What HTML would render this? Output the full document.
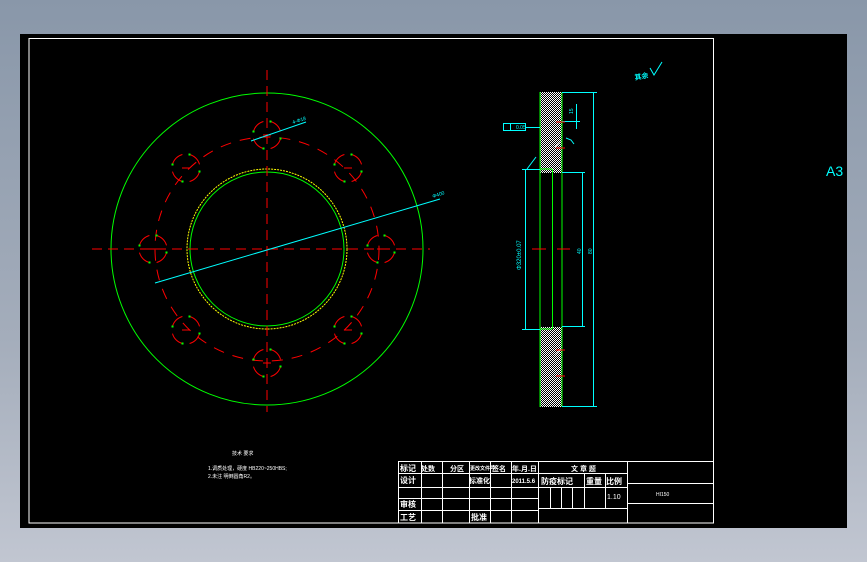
<!DOCTYPE html>
<html><head><meta charset="utf-8"><style>
html,body{margin:0;padding:0;}
body{width:867px;height:562px;overflow:hidden;background:linear-gradient(#8997a9,#a4adbb 60%,#c1c6d1);position:relative;font-family:"Liberation Sans","Noto Sans CJK SC",sans-serif;}
svg{position:absolute;left:0;top:0;}
</style></head><body>
<svg width="867" height="562" viewBox="0 0 867 562">
<defs>
<pattern id="hatch" width="2" height="2" patternUnits="userSpaceOnUse"><rect width="2" height="2" fill="#000"/><rect width="1" height="1" fill="#fff"/><rect x="1" y="1" width="1" height="1" fill="#fff"/></pattern>
<g id="bolt" fill="none" stroke="#f00" stroke-width="1">
<path d="M13.5 3.6 A14 14 0 0 1 3.6 13.5"/>
<path d="M-3.6 13.5 A14 14 0 0 1 -13.5 3.6"/>
<path d="M-13.5 -3.6 A14 14 0 0 1 -3.6 -13.5"/>
<path d="M3.6 -13.5 A14 14 0 0 1 13.5 -3.6"/>
<line x1="-4" y1="0" x2="4" y2="0"/>
<rect x="12.5" y="2.5" width="2" height="2" fill="#0f0" stroke="none"/>
<rect x="-4.5" y="12.5" width="2" height="2" fill="#0f0" stroke="none"/>
<rect x="-14.5" y="-4.5" width="2" height="2" fill="#0f0" stroke="none"/>
<rect x="2.5" y="-14.5" width="2" height="2" fill="#0f0" stroke="none"/>
</g>
</defs>
<rect x="20" y="34" width="827" height="494" fill="#000"/>
<rect x="29" y="38.5" width="684.5" height="484.5" fill="none" stroke="#fff" stroke-width="1"/>
<text x="826" y="176" fill="#0ff" font-size="14" font-family="Liberation Sans Narrow,Liberation Sans,sans-serif">A3</text>

<circle cx="267" cy="249" r="156" fill="none" stroke="#0f0" stroke-width="1"/>
<circle cx="267" cy="249" r="80" fill="none" stroke="#ff0" stroke-width="1" stroke-dasharray="2 1"/>
<circle cx="267" cy="249" r="77" fill="none" stroke="#0f0" stroke-width="1"/>
<circle cx="267" cy="249" r="112" fill="none" stroke="#f00" stroke-width="1" stroke-dasharray="11 9"/>
<line x1="92" y1="249" x2="430" y2="249" stroke="#f00" stroke-dasharray="10 6"/>
<line x1="267" y1="70" x2="267" y2="412" stroke="#f00" stroke-dasharray="10 6"/>
<use href="#bolt" x="381" y="249"/>
<use href="#bolt" x="153" y="249"/>
<use href="#bolt" x="267" y="135"/>
<use href="#bolt" x="267" y="363"/>
<use href="#bolt" x="348" y="168"/>
<use href="#bolt" x="186" y="168"/>
<use href="#bolt" x="186" y="330"/>
<use href="#bolt" x="348" y="330"/>
<line x1="155" y1="283" x2="440" y2="199" stroke="#0ff" stroke-width="1"/>
<line x1="251" y1="141" x2="306" y2="122" stroke="#0ff" stroke-width="1"/>
<text x="293" y="124" fill="#0ff" font-size="5" transform="rotate(-18 293 124)">4-Φ18</text>
<text x="433" y="198" fill="#0ff" font-size="5" transform="rotate(-18 433 198)">Φ400</text>

<rect x="540" y="92" width="22" height="81" fill="url(#hatch)"/>
<rect x="540" y="327" width="22" height="80" fill="url(#hatch)"/>
<line x1="540" y1="92" x2="540" y2="407" stroke="#0f0"/>
<line x1="562" y1="92" x2="562" y2="407" stroke="#0f0"/>
<line x1="552.5" y1="169" x2="552.5" y2="329" stroke="#0f0"/>
<line x1="540" y1="169" x2="552" y2="169" stroke="#0f0"/>
<line x1="540" y1="329" x2="552" y2="329" stroke="#0f0"/>
<line x1="555" y1="147" x2="561" y2="140" stroke="#fff" stroke-width=".6"/>
<line x1="555" y1="356" x2="561" y2="349" stroke="#fff" stroke-width=".6"/>
<g stroke="#0ff" fill="none" stroke-width="1">
<line x1="562" y1="92.5" x2="597" y2="92.5"/>
<line x1="562" y1="406.5" x2="597" y2="406.5"/>
<line x1="593.5" y1="92" x2="593.5" y2="407"/>
<line x1="562" y1="172.5" x2="585" y2="172.5"/>
<line x1="562" y1="326.5" x2="585" y2="326.5"/>
<line x1="582.5" y1="172" x2="582.5" y2="327"/>
<line x1="522" y1="169.5" x2="540" y2="169.5"/>
<line x1="522" y1="329.5" x2="540" y2="329.5"/>
<line x1="525.5" y1="169" x2="525.5" y2="329"/>
<rect x="503.5" y="123.5" width="22" height="7"/>
<line x1="510.5" y1="123.5" x2="510.5" y2="130.5"/>
<line x1="526" y1="127.5" x2="540" y2="127.5"/>
<line x1="576.5" y1="104" x2="576.5" y2="129"/>
<line x1="562" y1="121.5" x2="580" y2="121.5"/>
</g>
<line x1="556" y1="122" x2="565" y2="122" stroke="#f00"/>
<line x1="556" y1="148" x2="565" y2="148" stroke="#f00"/>
<line x1="556" y1="350" x2="565" y2="350" stroke="#f00"/>
<line x1="556" y1="376" x2="565" y2="376" stroke="#f00"/>
<line x1="532" y1="249" x2="546" y2="249" stroke="#f00"/>
<line x1="557" y1="249" x2="570" y2="249" stroke="#f00"/>
<text x="521" y="270" fill="#0ff" font-size="6" transform="rotate(-90 521 270)">Φ320±0.07</text>
<text x="581" y="254" fill="#0ff" font-size="5" transform="rotate(-90 581 254)">40</text>
<text x="592" y="254" fill="#0ff" font-size="5" transform="rotate(-90 592 254)">80</text>
<text x="573" y="114" fill="#0ff" font-size="5" transform="rotate(-90 573 114)">15</text>
<text x="516" y="129" fill="#0ff" font-size="5">0.05</text>
<text x="635" y="80" fill="#0ff" font-size="7" font-weight="bold" transform="rotate(-10 635 80)">其余</text>
<path d="M650 68 L654 75 L662 62" stroke="#0ff" fill="none"/>
<path d="M527 169 L530 165 L536 157" stroke="#0ff" fill="none"/>
<path d="M566 138 L571 140 L574 144" stroke="#0ff" fill="none"/>

<text x="232" y="455" fill="#fff" font-size="5">技术 要求</text>
<text x="208" y="470" fill="#fff" font-size="5">1.调质处理，硬度 HB220~250HBS;</text>
<text x="208" y="478" fill="#fff" font-size="5">2.未注 明倒圆角R2。</text>

<g stroke="#fff" stroke-width="1" fill="none">
<line x1="398.5" y1="461.5" x2="713" y2="461.5"/>
<line x1="398.5" y1="473.5" x2="627" y2="473.5"/>
<line x1="398.5" y1="487.5" x2="538" y2="487.5"/>
<line x1="398.5" y1="498.5" x2="538" y2="498.5"/>
<line x1="398.5" y1="510.5" x2="538" y2="510.5"/>
<line x1="398.5" y1="461" x2="398.5" y2="523"/>
<line x1="421.5" y1="461" x2="421.5" y2="523"/>
<line x1="442.5" y1="461" x2="442.5" y2="523"/>
<line x1="469.5" y1="461" x2="469.5" y2="523"/>
<line x1="490.5" y1="461" x2="490.5" y2="523"/>
<line x1="511.5" y1="461" x2="511.5" y2="523"/>
<line x1="538.5" y1="461" x2="538.5" y2="523"/>
<line x1="627.5" y1="461" x2="627.5" y2="523"/>
<line x1="538" y1="487.5" x2="627" y2="487.5"/>
<line x1="538" y1="508.5" x2="627" y2="508.5"/>
<line x1="550.5" y1="487" x2="550.5" y2="508"/>
<line x1="561.5" y1="487" x2="561.5" y2="508"/>
<line x1="572.5" y1="487" x2="572.5" y2="508"/>
<line x1="584.5" y1="473" x2="584.5" y2="508"/>
<line x1="605.5" y1="473" x2="605.5" y2="508"/>
<line x1="627" y1="483.5" x2="713" y2="483.5"/>
<line x1="627" y1="503.5" x2="713" y2="503.5"/>
</g>
<g fill="#fff" font-size="8" font-weight="bold">
<text x="400" y="471">标记</text><text x="421" y="471" font-size="7">处数</text>
<text x="450" y="471" font-size="7">分区</text><text x="470" y="470" font-size="5">更改文件号</text>
<text x="492" y="471" font-size="7">签名</text><text x="512" y="471" font-size="7">年.月.日</text>
<text x="571" y="471" font-size="7">文 章 题</text>
<text x="400" y="483">设计</text><text x="469" y="483" font-size="7">标准化</text>
<text x="512" y="483" font-size="6">2011.5.6</text>
<text x="541" y="484">防疫标记</text><text x="586" y="484">重量</text><text x="606" y="484">比例</text>
<text x="607" y="499" font-size="7" font-weight="normal">1.10</text>
<text x="400" y="507">审核</text><text x="400" y="520">工艺</text><text x="471" y="520">批准</text>
<text x="656" y="496" font-size="5" font-weight="normal">HI150</text>
</g>
</svg>
</body></html>
